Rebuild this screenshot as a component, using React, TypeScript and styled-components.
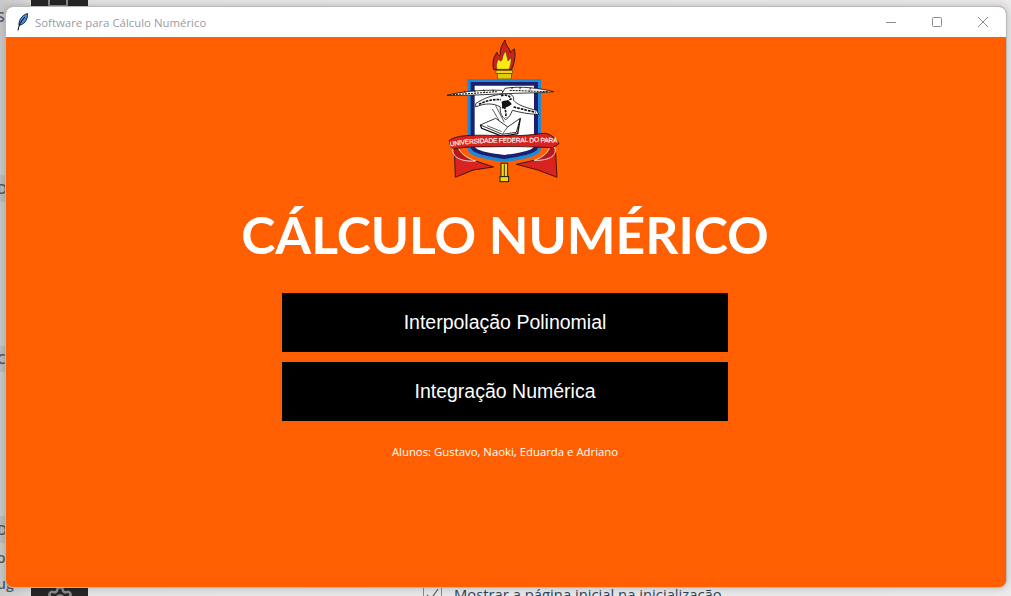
import React from "react";
import styled, { createGlobalStyle } from "styled-components";
import { Settings } from "lucide-react";

const Global = createGlobalStyle`
  html, body { margin: 0; padding: 0; height: 100%; overflow: hidden; background: #e9e9e9; }
  #root { height: 100%; }
`;

const Desktop = styled.div`
  position: relative;
  width: 1011px;
  height: 596px;
  overflow: hidden;
  display: flex;
  background: linear-gradient(90deg, #c9c9c9 0, #dcdcdc 30px, #e6e6e6 100px, #ebebeb 100%);
  font-family: "Open Sans", "Liberation Sans", sans-serif;
`;

const BackPane = styled.div`
  width: 31px;
  flex: none;
  display: grid;
  grid-template-rows: 8px 18px 149px 27px 144px 26px 144px 27px 6px 18px 8px 18px;
  overflow: hidden;
`;

const BackBand = styled.div`
  width: 6px;
  background: #bdbdbd;
  display: flex;
  align-items: center;
`;

const BackLetter = styled.span`
  margin-left: -3px;
  color: #555b66;
  font-size: 14px;
  line-height: 18px;
  font-weight: 600;
  white-space: nowrap;
`;

const BackSidebar = styled.div`
  width: 57px;
  flex: none;
  display: flex;
  flex-direction: column;
  justify-content: space-between;
  align-items: center;
  overflow: hidden;
  background: #262626;
  color: #8a8a8a;
`;

const BackTopIcon = styled.div`
  width: 16px;
  height: 12px;
  margin-top: -9px;
  margin-right: 4px;
  border: 2px solid #8a8a8a;
  border-radius: 2px;
  flex: none;
`;

const BackGear = styled(Settings)`
  flex: none;
  margin-bottom: -17px;
`;

const BackMain = styled.div`
  flex: 1;
  display: flex;
  align-items: flex-end;
  gap: 12px;
  padding-left: 335px;
  margin-bottom: -8px;
`;

const BackCheck = styled.div`
  width: 19px;
  height: 19px;
  box-sizing: border-box;
  flex: none;
  border: 1px solid #8d8d8d;
`;

const BackLabel = styled.div`
  color: #2f4358;
  font-size: 14.8px;
  line-height: 20px;
  white-space: nowrap;
`;

const Window = styled.div`
  position: absolute;
  left: 5px;
  top: 6px;
  width: 1002px;
  height: 582px;
  box-sizing: border-box;
  display: flex;
  flex-direction: column;
  border: 1px solid #b9b9b9;
  border-radius: 8px;
  overflow: hidden;
  background: #ff5f00;
  box-shadow: 0 0 9px rgba(0, 0, 0, 0.22);
`;

const TitleBar = styled.div`
  height: 30px;
  flex: none;
  display: flex;
  align-items: center;
  background: #ffffff;
`;

const Feather = styled.svg`
  width: 12px;
  height: 18px;
  margin-left: 11px;
  flex: none;
`;

const WindowTitle = styled.span`
  margin-left: 6px;
  color: #9a9aa2;
  font: 400 11.4px "Open Sans", sans-serif;
  flex: 1;
  white-space: nowrap;
`;

const WindowControl = styled.svg`
  width: 46px;
  height: 30px;
  flex: none;
  color: #8c8c8c;
`;

const Content = styled.main`
  flex: 1;
  display: flex;
  flex-direction: column;
  align-items: center;
`;

const Emblem = styled.svg`
  width: 113.3px;
  height: 143.3px;
  margin-top: 3px;
  margin-right: 5px;
  flex: none;
`;

const Heading = styled.h1`
  margin: 12px 2px 0 0;
  height: 78px;
  color: #ffffff;
  font: 700 51.6px/78px "Lato", sans-serif;
  white-space: nowrap;
`;

const MenuButton = styled.button<{ $first?: boolean }>`
  width: 446px;
  height: 59px;
  flex: none;
  margin-top: ${(p) => (p.$first ? "20px" : "10px")};
  margin-right: 2px;
  border: 0;
  padding: 0;
  background: #000000;
  color: #ffffff;
  font: 400 19.5px "Liberation Sans", sans-serif;
`;

const Credits = styled.p`
  margin: 22px 2px 0 0;
  color: #ffffff;
  font: 400 11.35px/18px "Open Sans", sans-serif;
  white-space: nowrap;
`;

const UfpaEmblem = () => (
  <Emblem viewBox="50 15 340 430" role="img" aria-label="Brasão da UFPA">
    <defs>
      <path id="ribbonArc" d="M60 335 C130 318 300 324 386 322" fill="none" />
    </defs>
    {/* flame */}
    <path d="M190 104 C185 82 190 66 200 52 C203 62 207 64 210 60 C208 42 216 28 224 15 C226 34 238 38 240 52 C246 46 250 42 252 42 C258 64 250 88 244 104 Z" fill="#c8241c" stroke="#3a1410" strokeWidth="3" />
    <path d="M200 103 C196 90 200 80 205 72 C209 80 214 80 216 72 C217 62 222 54 226 48 C228 62 232 68 233 78 C237 74 240 70 242 68 C244 80 240 94 236 103 Z" fill="#fbe716" stroke="#4a2a10" strokeWidth="1.5" />
    {/* torch */}
    <rect x="197" y="106" width="50" height="10" fill="#f2d810" stroke="#5a3d10" strokeWidth="2" />
    <rect x="201" y="116" width="42" height="16" fill="#e6c80c" stroke="#5a3d10" strokeWidth="2" />
    <rect x="212" y="385" width="20" height="42" fill="#f2d810" stroke="#1d1d1d" strokeWidth="3" />
    <rect x="209" y="425" width="26" height="15" fill="#f2d810" stroke="#1d1d1d" strokeWidth="3" />
    <path d="M222 388 V425" stroke="#1d1d1d" strokeWidth="2.5" />
    {/* ribbon tails */}
    <path d="M72 350 L75 427 L130 405 L190 396 L130 376 L90 366 Z" fill="#d8231f" stroke="#2a0b0b" strokeWidth="2.5" />
    <path d="M376 350 L380 427 L322 405 L258 388 L320 374 L358 364 Z" fill="#d8231f" stroke="#2a0b0b" strokeWidth="2.5" />
    {/* shield */}
    <path d="M112 132 H332 V338 C332 364 290 370 222 382 C154 370 112 364 112 338 Z" fill="#1c8ad8" />
    <path d="M121 141 H323 V336 C323 354 284 362 222 372 C160 362 121 354 121 336 Z" fill="#1b1f6e" />
    <path d="M133 152 H311 V332 C311 346 276 352 222 360 C168 352 133 346 133 332 Z" fill="#ffffff" />
    {/* eagle */}
    <path d="M50 181 C92 170 150 164 215 166 L220 176 C180 178 120 182 50 181 Z" fill="#ffffff" stroke="#111" strokeWidth="2.5" />
    <path d="M68 179 L202 170 M102 168 L106 178 M132 166 L136 176 M160 164 L164 174 M188 164 L190 172" stroke="#111" strokeWidth="3" fill="none" strokeDasharray="6 3" />
    <path d="M370 170 C330 160 270 152 224 160 L214 178 C262 172 320 176 370 170 Z" fill="#ffffff" stroke="#111" strokeWidth="2.5" />
    <path d="M352 170 L236 166 M300 158 L298 170 M270 156 L268 168 M246 156 L244 166" stroke="#111" strokeWidth="3" fill="none" strokeDasharray="6 3" />
    <path d="M136 206 C162 188 190 180 214 178 C236 172 252 178 250 196 C256 204 270 214 318 226 L326 238 C296 238 268 232 246 226 C242 238 236 248 226 254 C214 246 208 232 210 216 C190 204 162 204 136 216 Z" fill="#ffffff" stroke="#111" strokeWidth="2.5" />
    <path d="M146 208 C166 198 188 192 212 194 M212 182 C224 178 238 180 242 192 C232 196 222 206 216 222 M250 216 L316 232 M222 214 C226 226 228 236 226 248" stroke="#111" strokeWidth="5" fill="none" strokeDasharray="8 3" />
    <path d="M214 200 C226 194 240 196 244 208 C236 214 226 218 216 220 Z" fill="#111" />
    <path d="M196 212 L222 262 M186 222 L206 256" stroke="#111" strokeWidth="2" fill="none" />
    {/* book */}
    <path d="M150 270 L196 250 L232 276 L270 250 L258 292 L216 298 Z" fill="#ffffff" stroke="#111" strokeWidth="2.5" />
    <path d="M150 270 L154 280 L216 304 L262 296 L270 250" fill="none" stroke="#111" strokeWidth="4" />
    <path d="M232 276 L216 298 M170 272 L214 290" stroke="#111" strokeWidth="2" fill="none" />
    {/* ribbon */}
    <path d="M70 338 C60 358 82 382 136 378 C106 368 90 354 84 338 Z" fill="#b81818" stroke="#ffffff" strokeWidth="2.5" />
    <path d="M372 336 C384 358 360 378 312 376 C340 366 354 352 358 336 Z" fill="#b81818" stroke="#ffffff" strokeWidth="2.5" />
    <path d="M57 316 C84 298 130 300 215 302 C290 304 320 296 345 295 C362 298 378 310 386 326 C378 332 372 336 366 338 C300 336 270 334 215 335 C150 336 110 334 70 342 C62 336 56 328 57 316 Z" fill="#d8231f" stroke="#2a0b0b" strokeWidth="2.5" />
    <text fontFamily="'Liberation Sans', sans-serif" fontWeight="400" fontSize="20" fill="#ffffff" stroke="#ffffff" strokeWidth="0.4" textLength="322" lengthAdjust="spacing">
      <textPath href="#ribbonArc">UNIVERSIDADE FEDERAL DO PARÁ</textPath>
    </text>
  </Emblem>
);

export default function App() {
  return (
    <Desktop>
      <Global />
      <BackPane>
        <span />
        <BackLetter>S</BackLetter>
        <span />
        <BackBand><BackLetter>D</BackLetter></BackBand>
        <span />
        <BackBand><BackLetter>C</BackLetter></BackBand>
        <span />
        <BackBand><BackLetter>D</BackLetter></BackBand>
        <span />
        <BackLetter>o</BackLetter>
        <span />
        <BackLetter>ug</BackLetter>
      </BackPane>
      <BackSidebar>
        <BackTopIcon />
        <BackGear size={28} strokeWidth={2.2} />
      </BackSidebar>
      <BackMain>
        <BackCheck>
          <svg width="17" height="17" viewBox="0 0 17 17"><path d="M3 9 L7 13 L14 3" fill="none" stroke="#5a5a5a" strokeWidth="1.2" /></svg>
        </BackCheck>
        <BackLabel>Mostrar a página inicial na inicialização</BackLabel>
      </BackMain>

      <Window>
        <TitleBar>
          <Feather viewBox="0 0 12 18">
            <path d="M2 12.5 C1.5 8 4 2.5 10.5 0.5 C11 5 8.5 10.5 3.5 12 Z" fill="#4b8fd8" stroke="#0c1c3a" strokeWidth="0.9" />
            <path d="M1 17.5 C1.5 13 4 8 8 4" fill="none" stroke="#050505" strokeWidth="1" />
          </Feather>
          <WindowTitle>Software para Cálculo Numérico</WindowTitle>
          <WindowControl viewBox="0 0 46 30">
            <path d="M18 15.5 H28" stroke="currentColor" strokeWidth="1" />
          </WindowControl>
          <WindowControl viewBox="0 0 46 30">
            <rect x="18.5" y="10.5" width="9" height="9" rx="1" fill="none" stroke="currentColor" strokeWidth="1" />
          </WindowControl>
          <WindowControl viewBox="0 0 46 30">
            <path d="M18 10 L28 20 M28 10 L18 20" stroke="currentColor" strokeWidth="1" />
          </WindowControl>
        </TitleBar>
        <Content>
          <UfpaEmblem />
          <Heading>CÁLCULO NUMÉRICO</Heading>
          <MenuButton $first>Interpolação Polinomial</MenuButton>
          <MenuButton>Integração Numérica</MenuButton>
          <Credits>Alunos: Gustavo, Naoki, Eduarda e Adriano</Credits>
        </Content>
      </Window>
    </Desktop>
  );
}
